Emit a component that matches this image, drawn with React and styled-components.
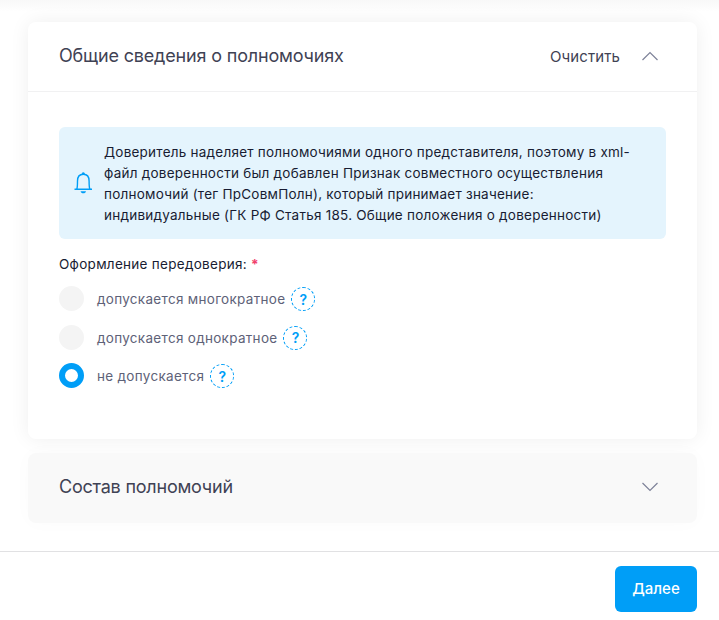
import React, { useState } from 'react';
import styled, { createGlobalStyle } from 'styled-components';

const GlobalStyle = createGlobalStyle`
  * {
    box-sizing: border-box;
  }
  body {
    margin: 0;
    background-color: #fff;
    font-family: Inter, 'Open Sans', sans-serif;
    color: #181c32;
  }
`;

const Page = styled.div`
  display: flex;
  flex-direction: column;
  height: 620px;
  overflow: hidden;
  background: linear-gradient(#f8f8f8, #fff 12px);
`;

const Panels = styled.main`
  display: flex;
  flex-direction: column;
  gap: 14px;
  height: 551px;
  padding: 22px 22px 0 28px;
`;

const Panel = styled.section`
  border-radius: 8px;
  background-color: ${({ $open }) => ($open ? '#fff' : '#f9f9f9')};
  box-shadow: ${({ $open }) =>
    $open ? '0 0 20px rgba(0, 0, 0, 0.065)' : '0 0 20px rgba(76, 87, 125, 0.02)'};
  height: ${({ $open }) => ($open ? '417px' : '70px')};
`;

const PanelHeader = styled.header`
  display: flex;
  align-items: center;
  height: 70px;
  padding: 0 37px 2px 31px;
  border-bottom: 1px solid ${({ $open }) => ($open ? '#f1f1f2' : 'transparent')};
`;

const PanelTitle = styled.h2`
  flex: 1;
  margin: 0;
  font-size: 18px;
  font-weight: 400;
  letter-spacing: ${({ $spacing }) => $spacing};
  color: #3f4254;
`;

const ClearButton = styled.button`
  padding: 2px 0 0;
  margin-right: 20px;
  border: none;
  background: none;
  font: 400 15px Inter, sans-serif;
  letter-spacing: 0.1px;
  color: #3f4254;
  cursor: pointer;
`;

const PanelBody = styled.div`
  padding: 35px 31px 0;
`;

const Notice = styled.div`
  display: flex;
  align-items: center;
  height: 112px;
  padding-left: 15px;
  border-radius: 6px;
  background-color: #e4f4fd;
`;

const NoticeText = styled.p`
  margin: 0 0 0 11px;
  padding-top: 2px;
  font-size: 13.5px;
  line-height: 21px;
  letter-spacing: 0.24px;
  white-space: nowrap;
`;

const GroupLabel = styled.div`
  margin-top: 16px;
  font-size: 13.5px;
  line-height: 18px;
  letter-spacing: 0.29px;
`;

const Required = styled.span`
  color: #f1416c;
  font-weight: 700;
`;

const Options = styled.div`
  display: flex;
  flex-direction: column;
  gap: 13.5px;
  margin-top: 13px;
`;

const Option = styled.label`
  display: flex;
  align-items: center;
  height: 25px;
  cursor: pointer;
`;

const Radio = styled.input`
  appearance: none;
  width: 25px;
  height: 25px;
  margin: 0 13px 0 0;
  border: ${({ checked }) => (checked ? '6px solid #009ef7' : 'none')};
  border-radius: 50%;
  background-color: ${({ checked }) => (checked ? '#fff' : '#f4f4f4')};
`;

const OptionText = styled.span`
  padding-top: 1px;
  margin-right: 6px;
  font-size: 13.5px;
  letter-spacing: 0.3px;
  color: #5e6278;
`;

const Help = styled.span`
  display: flex;
  align-items: center;
  justify-content: center;
  width: 24px;
  height: 24px;
  margin-top: 1px;
  border: 1px dashed #009ef7;
  border-radius: 50%;
  font-size: 14px;
  font-weight: 600;
  color: #009ef7;
`;

const Footer = styled.footer`
  display: flex;
  justify-content: flex-end;
  height: 69px;
  padding: 14px 22px 0 0;
  border-top: 1px solid #e1e1e3;
  background-color: #fff;
`;

const NextButton = styled.button`
  width: 82px;
  height: 46px;
  padding: 0 0 1px;
  border: none;
  border-radius: 6px;
  background-color: #009ef7;
  font: 500 15px Inter, sans-serif;
  color: #fff;
  cursor: pointer;
`;

const Chevron = ({ up }) => (
  <svg width="20" height="12" viewBox="0 0 20 12" fill="none" stroke="#7e8299" strokeWidth="1.2">
    <path d={up ? 'M2.5 10 10 2.5 17.5 10' : 'M2.5 2 10 9.5 17.5 2'} />
  </svg>
);

const Bell = () => (
  <svg width="19" height="23" viewBox="0 0 19 23" fill="none" stroke="#009ef7" strokeWidth="1.4">
    <path d="M.5 17.2h17.5M2.8 16.9C3.5 15.4 3.5 13.2 3.5 8.9 3.5 4.6 5.8 2.2 9.3 2.2s5.8 2.4 5.8 6.7c0 4.3 0 6.5.7 8" />
    <path d="M8 1.9a1.3 1.3 0 0 1 2.6 0z" fill="#009ef7" strokeWidth=".5" />
    <path d="M6.6 19.3h5.4c-.3 1.4-1.3 2-2.7 2s-2.4-.6-2.7-2z" fill="#009ef7" stroke="none" />
  </svg>
);

const options = [
  { id: 'many', name: 'допускается многократное' },
  { id: 'once', name: 'допускается однократное' },
  { id: 'none', name: 'не допускается' },
];

function App() {
  const [selected, setSelected] = useState('none');

  return (
    <Page>
      <GlobalStyle />
      <Panels>
        <Panel $open>
          <PanelHeader $open>
            <PanelTitle $spacing="-0.17px">Общие сведения о полномочиях</PanelTitle>
            <ClearButton onClick={() => setSelected('')}>Очистить</ClearButton>
            <Chevron up />
          </PanelHeader>
          <PanelBody>
            <Notice>
              <Bell />
              <NoticeText>
                Доверитель наделяет полномочиями одного представителя, поэтому в xml-
                <br />
                файл доверенности был добавлен Признак совместного осуществления
                <br />
                полномочий (тег ПрСовмПолн), который принимает значение:
                <br />
                индивидуальные (ГК РФ Статья 185. Общие положения о доверенности)
              </NoticeText>
            </Notice>
            <GroupLabel>
              Оформление передоверия: <Required>*</Required>
            </GroupLabel>
            <Options>
              {options.map((option) => (
                <Option key={option.id}>
                  <Radio
                    type="radio"
                    name="redelegation"
                    checked={selected === option.id}
                    onChange={() => setSelected(option.id)}
                  />
                  <OptionText>{option.name}</OptionText>
                  <Help>?</Help>
                </Option>
              ))}
            </Options>
          </PanelBody>
        </Panel>
        <Panel>
          <PanelHeader>
            <PanelTitle $spacing="-0.22px">Состав полномочий</PanelTitle>
            <Chevron />
          </PanelHeader>
        </Panel>
      </Panels>
      <Footer>
        <NextButton>Далее</NextButton>
      </Footer>
    </Page>
  );
}

export default App;
